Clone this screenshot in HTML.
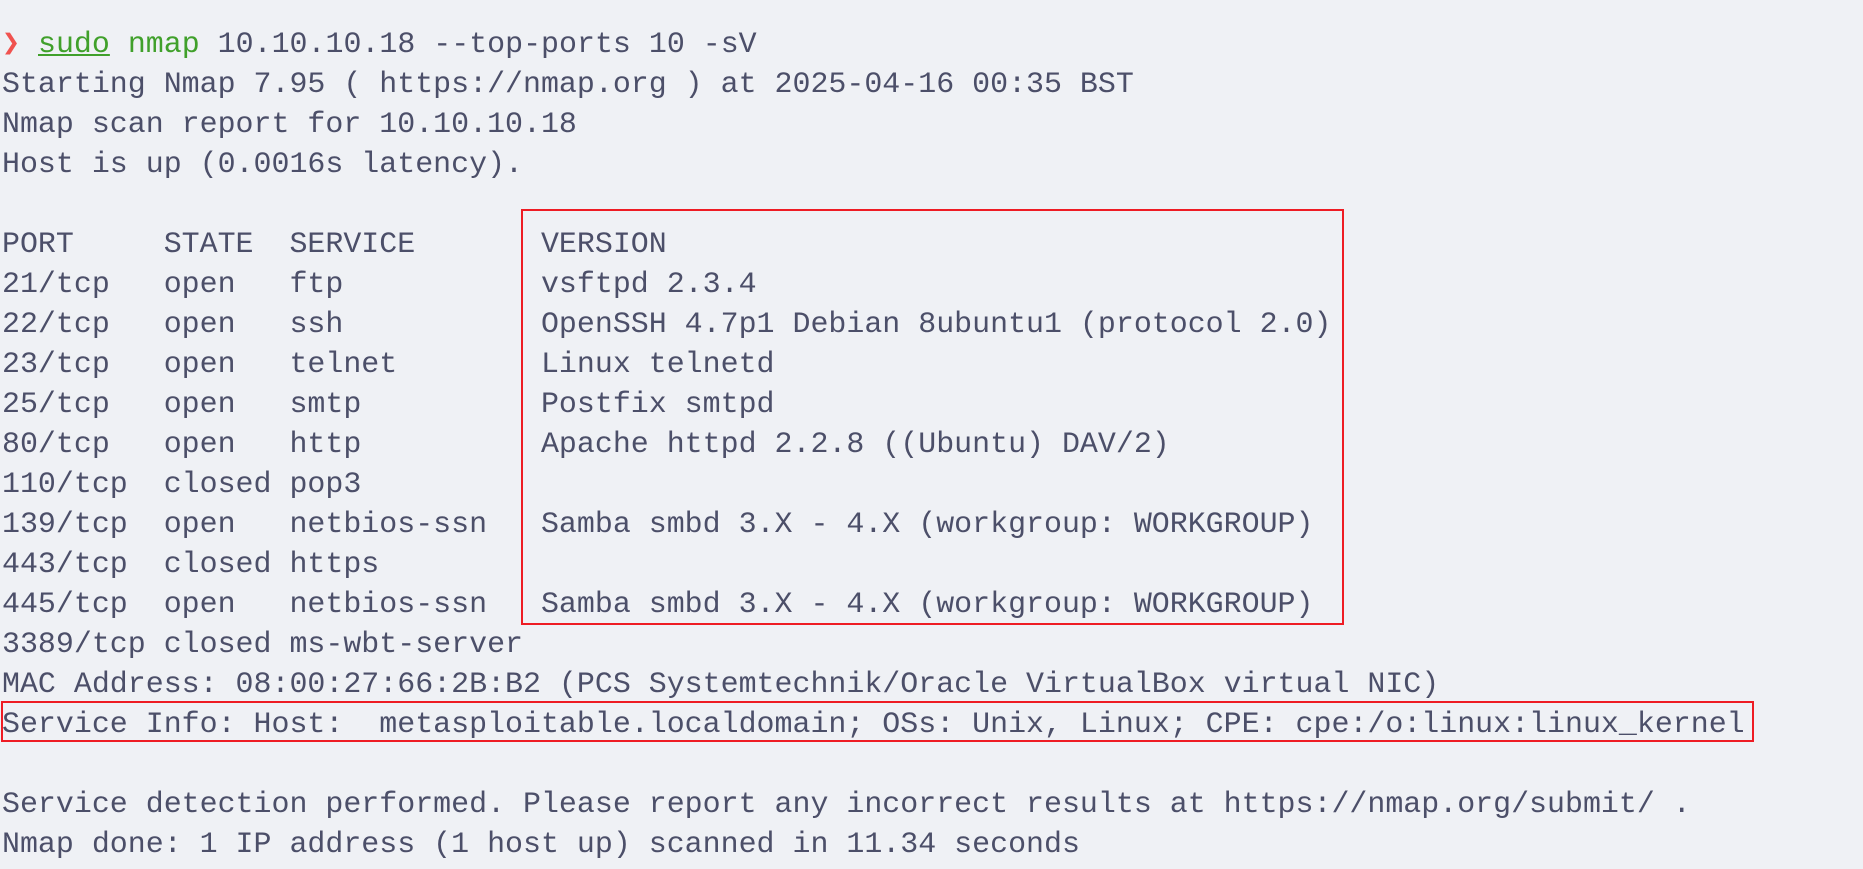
<!DOCTYPE html>
<html><head><meta charset="utf-8"><style>
html,body{margin:0;padding:0;background:#eff1f5;width:1863px;height:869px;overflow:hidden}
pre{margin:0;position:absolute;left:2px;top:24px;font-family:"Liberation Mono",monospace;font-size:29.95px;line-height:40px;color:#4c4f69}
.r{color:#f0524f}.g{color:#40a02b}.u{text-decoration:underline}
.box{position:absolute;border:2px solid #ee1c24}
</style></head><body>
<pre><span class="r">❯</span> <span class="g u">sudo</span> <span class="g">nmap</span> 10.10.10.18 --top-ports 10 -sV
Starting Nmap 7.95 ( https://nmap.org ) at 2025-04-16 00:35 BST
Nmap scan report for 10.10.10.18
Host is up (0.0016s latency).

PORT     STATE  SERVICE       VERSION
21/tcp   open   ftp           vsftpd 2.3.4
22/tcp   open   ssh           OpenSSH 4.7p1 Debian 8ubuntu1 (protocol 2.0)
23/tcp   open   telnet        Linux telnetd
25/tcp   open   smtp          Postfix smtpd
80/tcp   open   http          Apache httpd 2.2.8 ((Ubuntu) DAV/2)
110/tcp  closed pop3
139/tcp  open   netbios-ssn   Samba smbd 3.X - 4.X (workgroup: WORKGROUP)
443/tcp  closed https
445/tcp  open   netbios-ssn   Samba smbd 3.X - 4.X (workgroup: WORKGROUP)
3389/tcp closed ms-wbt-server
MAC Address: 08:00:27:66:2B:B2 (PCS Systemtechnik/Oracle VirtualBox virtual NIC)
Service Info: Host:  metasploitable.localdomain; OSs: Unix, Linux; CPE: cpe:/o:linux:linux_kernel

Service detection performed. Please report any incorrect results at https://nmap.org/submit/ .
Nmap done: 1 IP address (1 host up) scanned in 11.34 seconds</pre>
<div class="box" style="left:521px;top:209px;width:819px;height:412px"></div>
<div class="box" style="left:1px;top:701px;width:1749px;height:37px"></div>
</body></html>
